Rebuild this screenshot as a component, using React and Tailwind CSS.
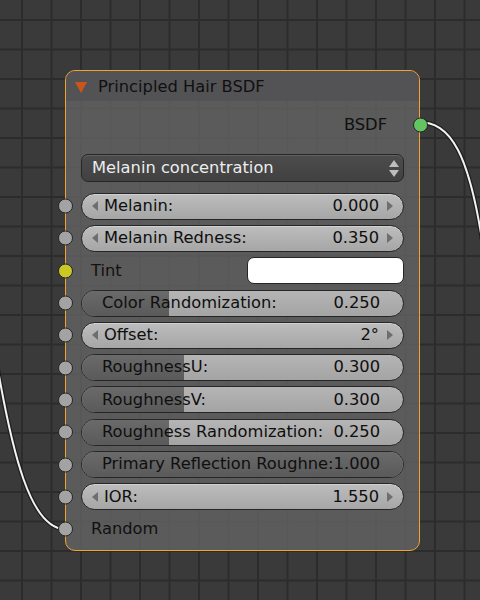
import React from 'react';

const rows = [
  { type: 'num', label: 'Melanin:', value: '0.000' },
  { type: 'num', label: 'Melanin Redness:', value: '0.350' },
  { type: 'color', label: 'Tint' },
  { type: 'slider', label: 'Color Randomization:', value: '0.250', fill: 0.25 },
  { type: 'num', label: 'Offset:', value: '2°' },
  { type: 'slider', label: 'RoughnessU:', value: '0.300', fill: 0.3 },
  { type: 'slider', label: 'RoughnessV:', value: '0.300', fill: 0.3 },
  { type: 'slider', label: 'Roughness Randomization:', value: '0.250', fill: 0.25 },
  { type: 'slider', label: 'Primary Reflection Roughne:', value: '1.000', fill: 1 },
  { type: 'num', label: 'IOR:', value: '1.550' },
  { type: 'plain', label: 'Random' },
];

const Socket = ({ color = 'bg-[#a3a3a3]', className = '' }) => (
  <span
    className={`absolute top-1/2 -translate-y-1/2 w-[15px] h-[15px] rounded-full border border-[#262626] ${color} ${className}`}
  />
);

const ArrowLeft = () => (
  <span className="w-0 h-0 border-y-[5px] border-y-transparent border-r-[6px] border-r-[#6e6e6e]" />
);

const ArrowRight = () => (
  <span className="w-0 h-0 border-y-[5px] border-y-transparent border-l-[6px] border-l-[#6e6e6e]" />
);

const NumField = ({ label, value }) => (
  <div className="flex-1 h-[27px] rounded-full border border-[#262626] bg-[linear-gradient(to_bottom,#bdbdbd,#a6a6a6)] shadow-[inset_0_1px_0_rgba(255,255,255,0.3)] flex items-center pl-[10px] pr-[10px] text-[#0f0f0f]">
    <ArrowLeft />
    <span className="ml-[6px]">{label}</span>
    <span className="ml-auto mr-[8px]">{value}</span>
    <ArrowRight />
  </div>
);

const SliderField = ({ label, value, fill }) => (
  <div className="relative flex-1 h-[27px] rounded-full border border-[#262626] overflow-hidden bg-[linear-gradient(to_bottom,#b5b5b5,#a4a4a4)] flex items-center text-[#0f0f0f]">
    <div
      className="absolute left-0 top-0 bottom-0 bg-[linear-gradient(to_bottom,#6a6a6a,#5a5a5a)]"
      style={{ width: `${8 + fill * 314}px` }}
    />
    <span className="relative pl-[20px] whitespace-nowrap">{label}</span>
    <span className="relative ml-auto pr-[23px]">{value}</span>
  </div>
);

const Row = ({ row }) => {
  const socketColor = row.type === 'color' ? 'bg-[#c9c825]' : 'bg-[#a3a3a3]';
  return (
    <div className="relative h-[32.3px] flex items-center px-[15px]">
      <Socket color={socketColor} className="left-[-8px]" />
      {row.type === 'num' && <NumField label={row.label} value={row.value} />}
      {row.type === 'slider' && <SliderField label={row.label} value={row.value} fill={row.fill} />}
      {row.type === 'color' && (
        <div className="flex-1 flex items-center">
          <span className="pl-[10px] text-[#111]">{row.label}</span>
          <div className="ml-auto w-[157px] h-[27px] rounded-[7px] border border-[#262626] bg-white" />
        </div>
      )}
      {row.type === 'plain' && <span className="pl-[10px] text-[#111]">{row.label}</span>}
    </div>
  );
};

export default function App() {
  return (
    <div className="relative w-[480px] h-[600px] overflow-hidden bg-[#3a3a3a] bg-[linear-gradient(to_right,#2c2c2c_2px,transparent_2px),linear-gradient(to_bottom,#2c2c2c_2px,transparent_2px)] bg-[size:29.5px_29.5px] bg-[position:21px_19px] font-['DejaVu_Sans',sans-serif] text-[16.3px] leading-none">
      {/* wires */}
      <svg className="absolute inset-0" width="480" height="600">
        <path d="M -2 370 C 12 450, 30 529, 65 529" fill="none" stroke="#1e1e1e" strokeWidth="4.5" />
        <path d="M -2 370 C 12 450, 30 529, 65 529" fill="none" stroke="#f2f2f2" strokeWidth="2" />
        <path d="M 418 122 C 450 122, 470 150, 485 260" fill="none" stroke="#1e1e1e" strokeWidth="4.5" />
        <path d="M 418 122 C 450 122, 470 150, 485 260" fill="none" stroke="#f2f2f2" strokeWidth="2" />
      </svg>

      {/* node */}
      <div className="absolute left-[65px] top-[70px] w-[355px] h-[481px] rounded-[10px] border border-[#f2a232] bg-[rgba(100,100,100,0.8)]">
        <div className="h-[30px] rounded-t-[9px] bg-[rgba(82,82,86,0.85)] flex items-center pt-[3px] pl-[9px] text-[#101010]">
          <span className="w-0 h-0 border-x-[6px] border-x-transparent border-t-[11px] border-t-[#c8561a]" />
          <span className="ml-[11px]">Principled Hair BSDF</span>
        </div>

        <div className="relative mt-[12px] h-[24px] flex items-center justify-end pr-[32px] text-[#101010]">
          BSDF
          <Socket color="bg-[#63c462]" className="right-[-9px]" />
        </div>

        <div className="mt-[17px] mx-[15px] h-[28px] rounded-[7px] border border-[#262626] bg-[linear-gradient(to_bottom,#4c4c4c,#414141)] shadow-[inset_0_1px_0_rgba(255,255,255,0.12)] flex items-center pl-[10px] pr-[4px] text-[#ececec]">
          <span>Melanin concentration</span>
          <span className="ml-auto flex flex-col gap-[3px]">
            <span className="w-0 h-0 border-x-[5px] border-x-transparent border-b-[7px] border-b-[#bdbdbd]" />
            <span className="w-0 h-0 border-x-[5px] border-x-transparent border-t-[7px] border-t-[#bdbdbd]" />
          </span>
        </div>

        <div className="mt-[8px]">
          {rows.map((row) => (
            <Row key={row.label} row={row} />
          ))}
        </div>
      </div>
    </div>
  );
}
